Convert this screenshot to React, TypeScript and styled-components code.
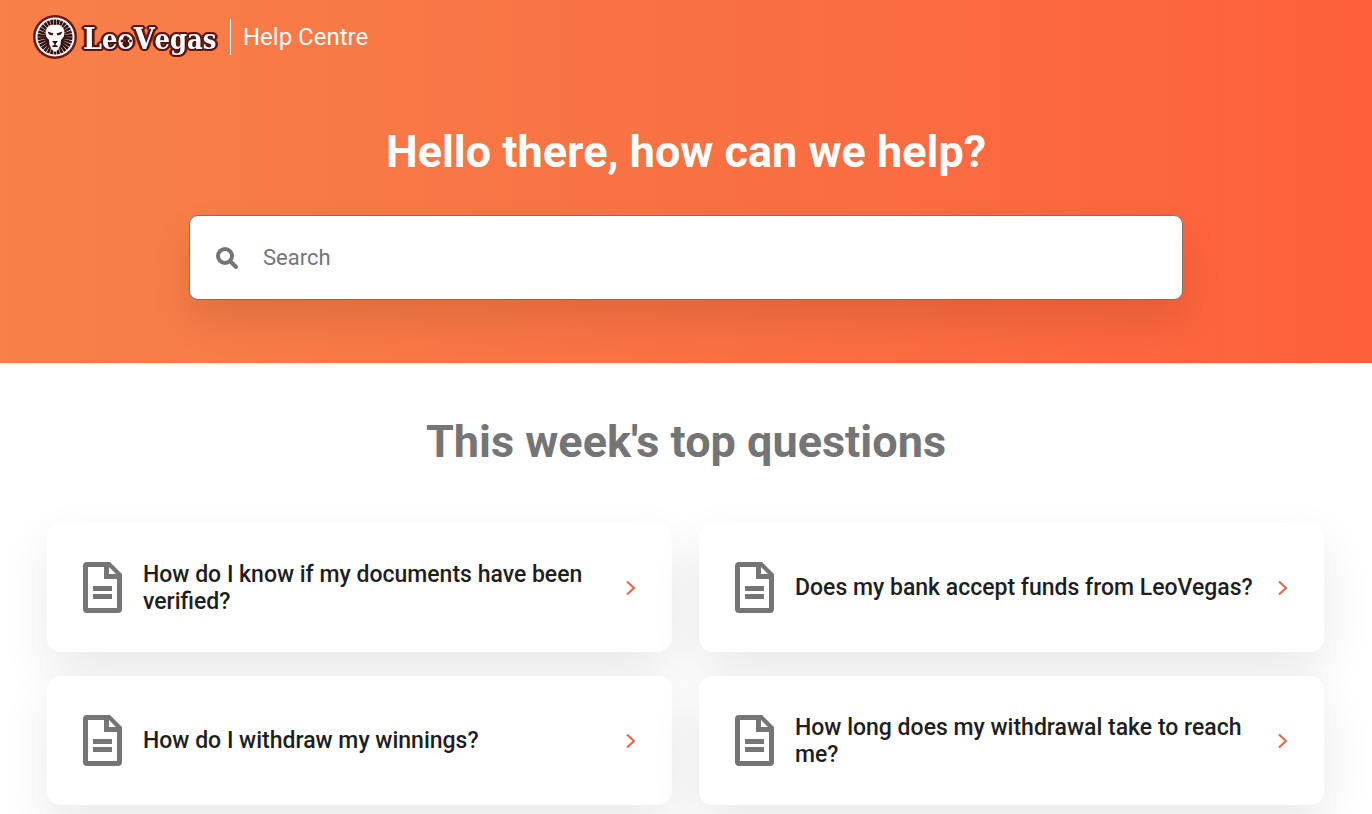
import React from "react";
import styled, { createGlobalStyle } from "styled-components";

const GlobalStyle = createGlobalStyle`
  *, *::before, *::after { box-sizing: border-box; }
  body {
    margin: 0;
    background: #fff;
    color: #1e1e1e;
    font-family: Roboto, "Liberation Sans", sans-serif;
  }
`;

const Page = styled.div`
  overflow: hidden;
`;

const Hero = styled.header`
  padding: 12px 32px 63px;
  background: linear-gradient(90deg, #f78149 0%, #f97143 50%, #fe603c 100%);
`;

const TopBar = styled.div`
  display: flex;
  align-items: center;
  height: 50px;
`;

const HomeLink = styled.a`
  display: flex;
  align-items: center;
  color: #fff;
  text-decoration: none;
  font-size: 24px;
  line-height: 36px;
`;

const SiteName = styled.span`
  margin-left: 12px;
  padding-left: 12px;
  border-left: 1px solid #fff;
`;

const HeroTitle = styled.h1`
  margin: 62px 0 36px;
  color: #fff;
  font-size: 45px;
  font-weight: 700;
  line-height: 55px;
  text-align: center;
`;

const SearchForm = styled.form`
  display: flex;
  align-items: center;
  width: 76%;
  height: 85px;
  margin: 0 auto;
  padding: 0 25px;
  border: 1px solid #757575;
  border-radius: 9px;
  background: #fff;
  box-shadow: 0 20px 40px rgba(0, 0, 0, 0.1);
`;

const SearchInput = styled.input`
  flex: 1;
  min-width: 0;
  margin-left: 24px;
  padding: 0;
  border: 0;
  outline: 0;
  background: transparent;
  color: #1e1e1e;
  font: 400 22px/28px Roboto, "Liberation Sans", sans-serif;
  &::placeholder { color: #757575; opacity: 1; }
`;

const Main = styled.main`
  padding: 51px 47px 9px;
`;

const SectionTitle = styled.h2`
  margin: 0 0 54px;
  color: #757575;
  font-size: 45px;
  font-weight: 700;
  line-height: 55px;
  text-align: center;
`;

const QuestionGrid = styled.ul`
  display: grid;
  grid-template-columns: 1fr 1fr;
  gap: 24px 27px;
  margin: 0 1px 0 0;
  padding: 0;
  list-style: none;
`;

const QuestionCard = styled.a`
  display: flex;
  align-items: center;
  min-height: 129px;
  padding: 24px 35px 24px 36px;
  border-radius: 14px;
  background: #fff;
  box-shadow: 0 20px 50px rgba(0, 0, 0, 0.09);
  color: #1e1e1e;
  text-decoration: none;
`;

const QuestionText = styled.span`
  flex: 1;
  margin: 0 20px 0 21px;
  font-size: 23px;
  font-weight: 500;
  line-height: 27px;
`;

const Icon = styled.svg`
  display: block;
  flex: none;
`;

const LogoText = styled.text`
  font-family: "DejaVu Serif Condensed", "DejaVu Serif", serif;
  font-stretch: condensed;
  font-weight: 700;
  font-size: 27px;
  fill: #fff;
  filter: drop-shadow(1px 1px 0 #451210) drop-shadow(-1px -1px 0 #451210)
    drop-shadow(1px -1px 0 #5f1815) drop-shadow(-1px 1px 0 #5f1815)
    drop-shadow(1px 0 0 #8a2a1c) drop-shadow(-1px 0 0 #8a2a1c);
`;

const LogoCapital = styled.tspan`
  font-size: 30px;
`;

const rays = Array.from({ length: 30 }, (_, i) => i * 12);

function Logo() {
  return (
    <Icon width="186" height="50" viewBox="0 0 186 50" role="img" aria-label="LeoVegas">
      <circle cx="23" cy="25" r="22" fill="#6a1815" />
      <circle cx="23" cy="25" r="19.500" fill="#fff" />
      <g fill="#35100f">
        {rays.map((a) => (
          <path key={a} d="M21.500 7.500 L24.500 7.500 L23.800 17 L22.200 17Z" transform={`rotate(${a} 23 25)`} />
        ))}
      </g>
      <path d="M23 13 C19 12 15 14 14 18 C13 21 14 24 15 27 C15 31 17 34 19 37 L23 40 L27 37 C29 34 31 31 31 27 C32 24 33 21 32 18 C31 14 27 12 23 13Z" fill="#fff" />
      <g fill="#35100f">
        <path d="M15.500 19.500 L21.500 21.500 L20.500 23.500 L17 22.500Z" />
        <path d="M30.500 19.500 L24.500 21.500 L25.500 23.500 L29 22.500Z" />
        <path d="M20 29 H26 L24 31.500 L23.500 33 L26.500 34 L25 35 H21 L19.500 34 L22.500 33 L22 31.500Z" />
        <path d="M13.500 24 L17 28 L17.500 33 L19.500 37 L15 34Z" />
        <path d="M32.500 24 L29 28 L28.500 33 L26.500 37 L31 34Z" />
      </g>
      <LogoText x="51" y="37">
        <LogoCapital>L</LogoCapital>eo<LogoCapital>V</LogoCapital>egas
      </LogoText>
      <g fill="#45130f">
        <ellipse cx="94" cy="32" rx="3.500" ry="2.800" />
        <circle cx="90" cy="29" r="1.400" />
        <circle cx="92.500" cy="26.500" r="1.500" />
        <circle cx="96" cy="26.500" r="1.500" />
        <circle cx="98.500" cy="29" r="1.400" />
      </g>
    </Icon>
  );
}

function SearchIcon() {
  return (
    <Icon width="24" height="24" viewBox="0 0 24 24" aria-hidden="true">
      <circle cx="10" cy="10" r="7" fill="none" stroke="#757575" strokeWidth="4" />
      <path d="M15 15 L21 21" stroke="#757575" strokeWidth="4" strokeLinecap="round" />
    </Icon>
  );
}

function DocumentIcon() {
  return (
    <Icon width="39" height="51" viewBox="0 0 39 51" aria-hidden="true">
      <path
        fill="#757575"
        fillRule="evenodd"
        d="M4 0H27L39 12V47Q39 51 35 51H4Q0 51 0 47V4Q0 0 4 0Z M5 5V46H34V17H21V5Z M26 5V12H33Z"
      />
      <path d="M10 26.500H29 M10 34.500H29" stroke="#757575" strokeWidth="5" />
    </Icon>
  );
}

function Chevron() {
  return (
    <Icon width="12" height="16" viewBox="0 0 12 16" aria-hidden="true">
      <path d="M2 1.500 L9 8 L2 14.500" fill="none" stroke="#e26a4e" strokeWidth="2.200" />
    </Icon>
  );
}

const questions = [
  "How do I know if my documents have been verified?",
  "Does my bank accept funds from LeoVegas?",
  "How do I withdraw my winnings?",
  "How long does my withdrawal take to reach me?",
];

export default function App() {
  return (
    <Page>
      <GlobalStyle />
      <Hero>
        <TopBar>
          <HomeLink href="#">
            <Logo />
            <SiteName>Help Centre</SiteName>
          </HomeLink>
        </TopBar>
        <HeroTitle>Hello there, how can we help?</HeroTitle>
        <SearchForm role="search">
          <SearchIcon />
          <SearchInput type="search" placeholder="Search" aria-label="Search" />
        </SearchForm>
      </Hero>
      <Main>
        <SectionTitle>This week's top questions</SectionTitle>
        <QuestionGrid>
          {questions.map((question) => (
            <li key={question}>
              <QuestionCard href="#">
                <DocumentIcon />
                <QuestionText>{question}</QuestionText>
                <Chevron />
              </QuestionCard>
            </li>
          ))}
        </QuestionGrid>
      </Main>
    </Page>
  );
}
